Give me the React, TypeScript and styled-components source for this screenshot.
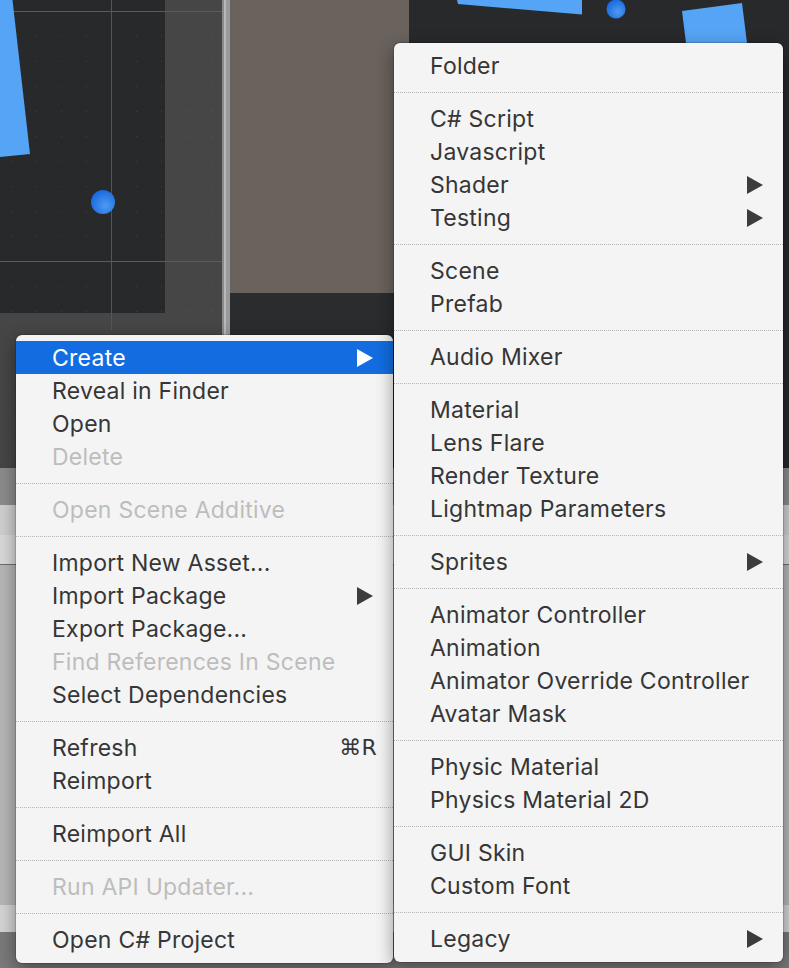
import React from "react";
import styled, { createGlobalStyle } from "styled-components";

const GlobalStyle = createGlobalStyle`
  html, body { margin: 0; padding: 0; background: #464646; overflow: hidden; }
  #root { width: 789px; height: 968px; }
`;

const Page = styled.div`
  position: relative;
  width: 789px;
  height: 968px;
  overflow: hidden;
  display: grid;
  grid-template-rows: 468px 1fr;
  font-family: Inter, "Liberation Sans", "DejaVu Sans", sans-serif;
`;

const TopRow = styled.div`
  display: grid;
  grid-template-columns: 222px 8px 179px 1fr;
`;

const SceneView = styled.div`
  background: #464646;
  overflow: hidden;
  line-height: 0;
`;

const Splitter = styled.div`
  background: linear-gradient(90deg, #8a8a8a 0 2px, #b9b9b9 2px 4px, #9a9a9a 4px 8px);
`;

const InspectorPanel = styled.div`
  display: flex;
  flex-direction: column;
`;

const InspectorBody = styled.div`
  height: 293px;
  background: #6a625c;
`;

const InspectorFoot = styled.div`
  flex: 1;
  background: #2a2c2e;
`;

const GameView = styled.div`
  background: #27292b;
  overflow: hidden;
  line-height: 0;
`;

const ProjectWindow = styled.div`
  display: flex;
  flex-direction: column;
`;

const Band = styled.div<{ $h: number; $bg: string; $line?: boolean }>`
  height: ${(p) => p.$h}px;
  flex: ${(p) => (p.$h === 0 ? 1 : "none")};
  background: ${(p) => p.$bg};
  border-bottom: ${(p) => (p.$line ? "1px solid #6e6e6e" : "none")};
  box-sizing: border-box;
`;

const Menu = styled.div<{ $x: number; $y: number; $w: number; $z: number }>`
  position: absolute;
  left: ${(p) => p.$x}px;
  top: ${(p) => p.$y}px;
  width: ${(p) => p.$w}px;
  z-index: ${(p) => p.$z};
  box-sizing: border-box;
  background: #f4f4f4;
  border-radius: 6px;
  padding: 6px 0 7px;
  box-shadow: 0 0 0 1px rgba(0, 0, 0, 0.14), 0 6px 18px rgba(0, 0, 0, 0.42);
  display: flex;
  flex-direction: column;
`;

const Item = styled.div<{ $disabled?: boolean; $active?: boolean }>`
  height: 33px;
  display: flex;
  align-items: center;
  padding: 0 20px 0 36px;
  font-size: 23px;
  letter-spacing: 0.25px;
  color: ${(p) => (p.$active ? "#ffffff" : p.$disabled ? "#bdbdbd" : "#363636")};
  background: ${(p) => (p.$active ? "#136de0" : "transparent")};
  white-space: nowrap;
`;

const Label = styled.span`
  flex: 1;
`;

const Shortcut = styled.span`
  font-family: "DejaVu Sans", Inter, sans-serif;
  font-size: 22px;
  margin-right: -4px;
  color: #363636;
`;

const Separator = styled.div`
  height: 20px;
  display: flex;
  align-items: center;
  &::after {
    content: "";
    flex: 1;
    border-top: 1px dotted #b4b4b4;
  }
`;

const ArrowSvg = styled.svg`
  width: 16px;
  height: 18px;
  flex: none;
`;

const Arrow = ({ light }: { light?: boolean }) => (
  <ArrowSvg viewBox="0 0 16 18">
    <polygon points="0,0 16,9 0,18" fill={light ? "#ffffff" : "#3c3c3c"} />
  </ArrowSvg>
);

type Entry =
  | { sep: true }
  | { label: string; disabled?: boolean; active?: boolean; sub?: boolean; key?: string };

const leftItems: Entry[] = [
  { label: "Create", active: true, sub: true },
  { label: "Reveal in Finder" },
  { label: "Open" },
  { label: "Delete", disabled: true },
  { sep: true },
  { label: "Open Scene Additive", disabled: true },
  { sep: true },
  { label: "Import New Asset..." },
  { label: "Import Package", sub: true },
  { label: "Export Package..." },
  { label: "Find References In Scene", disabled: true },
  { label: "Select Dependencies" },
  { sep: true },
  { label: "Refresh", key: "⌘R" },
  { label: "Reimport" },
  { sep: true },
  { label: "Reimport All" },
  { sep: true },
  { label: "Run API Updater...", disabled: true },
  { sep: true },
  { label: "Open C# Project" },
];

const rightItems: Entry[] = [
  { label: "Folder" },
  { sep: true },
  { label: "C# Script" },
  { label: "Javascript" },
  { label: "Shader", sub: true },
  { label: "Testing", sub: true },
  { sep: true },
  { label: "Scene" },
  { label: "Prefab" },
  { sep: true },
  { label: "Audio Mixer" },
  { sep: true },
  { label: "Material" },
  { label: "Lens Flare" },
  { label: "Render Texture" },
  { label: "Lightmap Parameters" },
  { sep: true },
  { label: "Sprites", sub: true },
  { sep: true },
  { label: "Animator Controller" },
  { label: "Animation" },
  { label: "Animator Override Controller" },
  { label: "Avatar Mask" },
  { sep: true },
  { label: "Physic Material" },
  { label: "Physics Material 2D" },
  { sep: true },
  { label: "GUI Skin" },
  { label: "Custom Font" },
  { sep: true },
  { label: "Legacy", sub: true },
];

const MenuList = ({ items }: { items: Entry[] }) => (
  <>
    {items.map((e, i) =>
      "sep" in e ? (
        <Separator key={i} />
      ) : (
        <Item key={i} $disabled={e.disabled} $active={e.active}>
          <Label>{e.label}</Label>
          {e.key && <Shortcut>{e.key}</Shortcut>}
          {e.sub && <Arrow light={e.active} />}
        </Item>
      )
    )}
  </>
);

const SceneDrawing = () => (
  <svg width="222" height="468" viewBox="0 0 222 468">
    <defs>
      <pattern id="dotsDark" x="11" y="11" width="25" height="25" patternUnits="userSpaceOnUse">
        <rect x="0" y="0" width="1" height="1" fill="#3d3f41" />
      </pattern>
      <pattern id="dotsGrey" x="11" y="11" width="25" height="25" patternUnits="userSpaceOnUse">
        <rect x="0" y="0" width="1" height="1" fill="#575757" />
      </pattern>
      <radialGradient id="sphere" cx="0.6" cy="0.65" r="0.7">
        <stop offset="0" stopColor="#4f9af3" />
        <stop offset="1" stopColor="#1466dc" />
      </radialGradient>
    </defs>
    <rect x="0" y="0" width="222" height="468" fill="#464646" />
    <rect x="0" y="0" width="222" height="468" fill="url(#dotsGrey)" />
    <rect x="0" y="0" width="165" height="313" fill="#27292b" />
    <rect x="0" y="0" width="165" height="313" fill="url(#dotsDark)" />
    <line x1="13" y1="11.5" x2="222" y2="11.5" stroke="#5b5b5b" strokeWidth="1" />
    <line x1="0" y1="261.5" x2="222" y2="261.5" stroke="#5b5b5b" strokeWidth="1" />
    <line x1="111.5" y1="0" x2="111.5" y2="330" stroke="#555555" strokeWidth="1" />
    <polygon points="0,0 12.5,0 30,154 0,157" fill="#56a4f5" />
    <circle cx="103" cy="202" r="12" fill="url(#sphere)" />
  </svg>
);

const GameDrawing = () => (
  <svg width="380" height="468" viewBox="409 0 380 468">
    <defs>
      <radialGradient id="sphere2" cx="0.6" cy="0.65" r="0.7">
        <stop offset="0" stopColor="#4f9af3" />
        <stop offset="1" stopColor="#1466dc" />
      </radialGradient>
    </defs>
    <rect x="409" y="0" width="380" height="468" fill="#27292b" />
    <polygon points="457,0 582,0 582,14.5 458,4" fill="#56a4f5" />
    <circle cx="616" cy="9" r="9.5" fill="url(#sphere2)" />
    <polygon points="682,11 742,3 747,43 686,43" fill="#56a4f5" />
  </svg>
);

export default function App() {
  return (
    <>
      <GlobalStyle />
      <Page>
        <TopRow>
          <SceneView>
            <SceneDrawing />
          </SceneView>
          <Splitter />
          <InspectorPanel>
            <InspectorBody />
            <InspectorFoot />
          </InspectorPanel>
          <GameView>
            <GameDrawing />
          </GameView>
        </TopRow>
        <ProjectWindow>
          <Band $h={37} $bg="#8c8c8c" />
          <Band $h={30} $bg="#cfcfcf" />
          <Band $h={30} $bg="#d9d9d9" $line />
          <Band $h={340} $bg="#b6b6b6" />
          <Band $h={27} $bg="#d4d4d4" />
          <Band $h={0} $bg="#7a7a7a" />
        </ProjectWindow>

        <Menu $x={16} $y={335} $w={377} $z={1}>
          <MenuList items={leftItems} />
        </Menu>
        <Menu $x={394} $y={43} $w={389} $z={2}>
          <MenuList items={rightItems} />
        </Menu>
      </Page>
    </>
  );
}
